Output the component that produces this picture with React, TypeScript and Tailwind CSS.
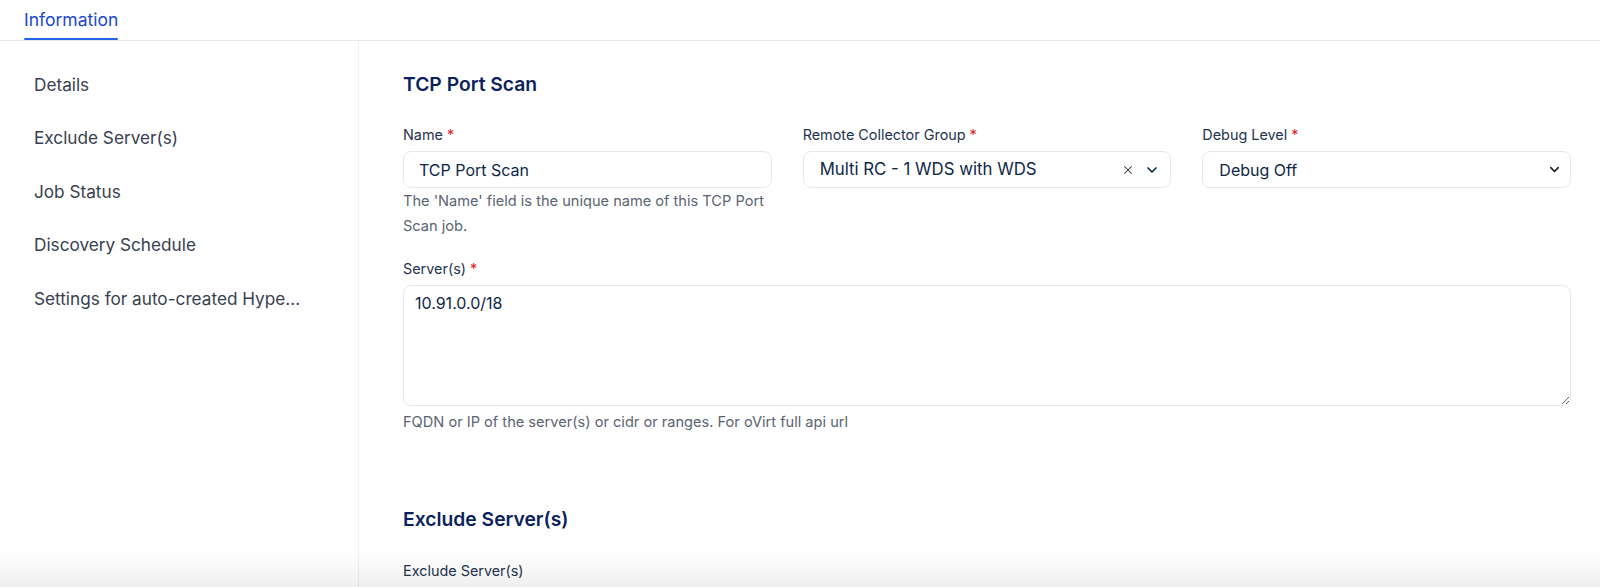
import { ChevronDown, X } from "lucide-react";

const sections = [
  "Details",
  "Exclude Server(s)",
  "Job Status",
  "Discovery Schedule",
  "Settings for auto-created Hype...",
];

const Label = ({ text, required }: { text: string; required?: boolean }) => (
  <label className="block text-[14.4px] leading-5 text-[#1f3350]">
    {text}
    {required && <span className="ml-1 text-[#e02424]">*</span>}
  </label>
);

export default function App() {
  return (
    <div
      className="relative h-[587px] overflow-hidden bg-white"
      style={{ fontFamily: "Inter, 'Noto Sans', sans-serif" }}
    >
      {/* tabs */}
      <div className="flex h-[41px] items-end border-b border-[#e3e8ef] px-6">
        <div className="flex h-full flex-col justify-end">
          <span className="pb-[6px] text-[17.5px] leading-6 text-[#1a47d6]">Information</span>
          <div className="h-[2px] rounded-full bg-[#2563eb]" />
        </div>
      </div>

      <div className="flex">
        {/* side nav */}
        <nav className="w-[359px] shrink-0 border-r border-[#f1f1f4] pt-[17px] h-[546px]">
          {sections.map((s) => (
            <div key={s} className="flex h-[53.5px] items-center pl-[34px] text-[17.2px] text-[#374151]">
              {s}
            </div>
          ))}
        </nav>

        {/* form */}
        <main className="flex-1 pl-[44px] pr-[29px] pt-[29px]">
          <h2 className="text-[19.3px] leading-7 font-semibold text-[#0c1f5e]">TCP Port Scan</h2>

          <div className="mt-[27px] grid grid-cols-3 gap-x-[31px]">
            <div>
              <Label text="Name" required />
              <input
                readOnly
                value="TCP Port Scan"
                className="mt-[6px] h-[37px] w-full rounded-lg border border-[#e2e8f0] px-[15px] text-[16px] text-[#0f2747] outline-none"
              />
              <p className="mt-[1px] text-[14.6px] leading-[24.5px] text-[#5b6472]">
                The 'Name' field is the unique name of this TCP Port Scan job.
              </p>
            </div>
            <div>
              <Label text="Remote Collector Group" required />
              <div className="mt-[6px] flex h-[37px] items-center rounded-lg border border-[#e2e8f0] pl-4 pr-[10px] text-[16.8px] text-[#0f2747]">
                <span className="flex-1">Multi RC - 1 WDS with WDS</span>
                <X className="h-[14px] w-[14px] text-[#333]" strokeWidth={1.8} />
                <ChevronDown className="ml-[9px] h-[16px] w-[16px] text-[#0f2747]" strokeWidth={2.5} />
              </div>
            </div>
            <div>
              <Label text="Debug Level" required />
              <div className="mt-[6px] flex h-[37px] items-center rounded-lg border border-[#e2e8f0] pl-4 pr-[8px] text-[16px] text-[#0f2747]">
                <span className="flex-1">Debug Off</span>
                <ChevronDown className="h-[15px] w-[15px] text-[#222]" strokeWidth={2.5} />
              </div>
            </div>
          </div>

          <div className="mt-[21px]">
            <Label text="Server(s)" required />
            <textarea
              readOnly
              value="10.91.0.0/18"
              className="mt-[6px] block h-[121px] w-full resize-y rounded-lg border border-[#e2e8f0] px-[11px] pt-[7px] text-[16px] leading-5 text-[#0f2747] outline-none"
            />
            <p className="mt-[6px] text-[14.6px] leading-5 text-[#5b6472]">
              FQDN or IP of the server(s) or cidr or ranges. For oVirt full api url
            </p>
          </div>

          <h2 className="mt-[73px] text-[19.3px] leading-7 font-semibold text-[#0c1f5e]">Exclude Server(s)</h2>
          <div className="mt-[28px]">
            <Label text="Exclude Server(s)" />
          </div>
        </main>
      </div>

      <div className="pointer-events-none absolute inset-x-0 bottom-0 h-[36px] bg-gradient-to-b from-transparent to-[#00000010]" />
    </div>
  );
}
